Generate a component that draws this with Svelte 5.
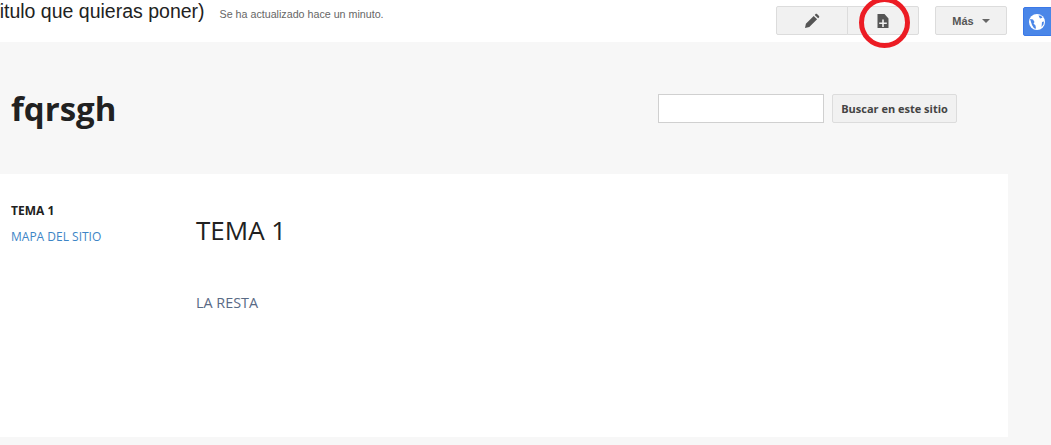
<script>
	let query = $state('');
</script>

<div class="page">
	<header class="topbar">
		<div class="title-wrap">
			<span class="page-title">(Titulo que quieras poner)</span>
			<span class="updated">Se ha actualizado hace un minuto.</span>
		</div>
		<div class="actions">
			<div class="btn-group">
				<button class="tool first" aria-label="Editar">
					<svg width="16" height="16" viewBox="0 0 16 16"><path d="M1 15l.9-4.300 7.800-7.800 3.400 3.400-7.800 7.800zM10.700 1.900l.9-.9c.4-.4 1-.4 1.400 0l2 2c.4.4.4 1 0 1.400l-.9.9z" fill="#555"/></svg>
				</button>
				<button class="tool last" aria-label="Nueva página">
					<svg width="12" height="14" viewBox="0 0 12 14"><path fill-rule="evenodd" d="M.5 0h7L11.500 4.500V14H.5zM5.200 5.500v3H2.200v1.600h3v3h1.600v-3h3V8.500h-3v-3z" fill="#555"/></svg>
				</button>
			</div>
			<button class="more">Más <span class="caret"></span></button>
			<button class="share" aria-label="Compartir">
				<svg width="16" height="16" viewBox="0 0 16 16"><circle cx="8" cy="8" r="8" fill="#fff"/><path d="M1 5l3 .5 1.500 2.500-1 1.500 2 2 .5 3.300-2-.5-2-3.300zM9.500 1.500l2.500.3 1.500 2-2.500.7zM13 8l2-.5-.5 3-2 2.500z" fill="#4a86e8"/></svg>
			</button>
		</div>
	</header>

	<section class="banner">
		<h1 class="site-name">fqrsgh</h1>
		<form class="search" onsubmit={(e) => e.preventDefault()}>
			<input type="text" bind:value={query} aria-label="Buscar" />
			<button type="submit">Buscar en este sitio</button>
		</form>
	</section>

	<main class="content">
		<nav class="sidebar">
			<a class="current" href="#tema">TEMA 1</a>
			<a href="#mapa">MAPA DEL SITIO</a>
		</nav>
		<article class="body">
			<h2>TEMA 1</h2>
			<p>LA RESTA</p>
		</article>
	</main>

	<!-- the red circle someone drew over the screenshot -->
	<div class="scribble"></div>
</div>

<style>
	:global(body) {
		margin: 0;
		background: #f7f7f7;
	}
	.page {
		position: relative;
		width: 1051px;
		height: 445px;
		overflow: hidden;
		background: #f7f7f7;
		font-family: "Open Sans", sans-serif;
	}
	.topbar {
		display: flex;
		justify-content: space-between;
		height: 42px;
		background: #fff;
	}
	.title-wrap {
		display: flex;
		align-items: baseline;
		gap: 15px;
		margin-left: -18px;
		font-family: "Liberation Sans", Arial, sans-serif;
		white-space: nowrap;
		height: 24px;
	}
	.page-title {
		font-size: 19.5px;
		line-height: 22px;
		color: #222;
	}
	.updated {
		font-size: 10.7px;
		color: #666;
	}
	.actions {
		display: flex;
		align-items: flex-start;
		padding-top: 6px;
		margin-right: -22px;
	}
	.btn-group {
		display: flex;
		margin-right: 16px;
	}
	button {
		font-family: "Liberation Sans", Arial, sans-serif;
		cursor: pointer;
	}
	.tool {
		display: flex;
		align-items: center;
		justify-content: center;
		width: 72px;
		height: 29px;
		padding: 0;
		background: #f1f1f1;
		border: 1px solid #dcdcdc;
	}
	.tool.first {
		border-radius: 2px 0 0 2px;
	}
	.tool.last {
		margin-left: -1px;
		border-radius: 0 2px 2px 0;
	}
	.more {
		display: flex;
		align-items: center;
		justify-content: center;
		gap: 8px;
		width: 72px;
		height: 29px;
		padding: 0;
		margin-right: 16px;
		background: #f1f1f1;
		border: 1px solid #dcdcdc;
		border-radius: 2px;
		font-size: 11px;
		font-weight: bold;
		color: #555;
	}
	.caret {
		width: 0;
		height: 0;
		border-left: 4px solid transparent;
		border-right: 4px solid transparent;
		border-top: 4px solid #666;
	}
	.share {
		display: flex;
		align-items: center;
		padding: 0 0 0 5px;
		width: 50px;
		height: 29px;
		margin-top: 1px;
		background: #4a86e8;
		border: 1px solid #3b78e7;
		border-radius: 2px;
	}
	.share svg {
		flex-shrink: 0;
	}
	.banner {
		display: flex;
		align-items: center;
		justify-content: space-between;
		height: 132px;
		padding: 0 94px 0 11px;
	}
	.site-name {
		margin: 0;
		font-size: 33px;
		font-weight: 700;
		color: #212121;
	}
	.search {
		display: flex;
		gap: 8px;
	}
	.search input {
		box-sizing: border-box;
		width: 166px;
		height: 29px;
		padding: 0 6px;
		background: #fff;
		border: 1px solid #d0d0d0;
		outline: none;
	}
	.search button {
		box-sizing: border-box;
		width: 125px;
		height: 29px;
		padding: 0;
		background: #f1f1f1;
		border: 1px solid #dcdcdc;
		border-radius: 2px;
		font-family: "Open Sans", sans-serif;
		font-size: 11px;
		font-weight: 700;
		color: #444;
	}
	.content {
		display: flex;
		width: 1008px;
		height: 263px;
		background: #fff;
	}
	.sidebar {
		display: flex;
		flex-direction: column;
		gap: 8px;
		width: 196px;
		padding: 28px 0 0 11px;
		box-sizing: border-box;
		font-size: 12px;
		line-height: 18px;
	}
	.sidebar a {
		color: #3d85c6;
		text-decoration: none;
	}
	.sidebar a.current {
		color: #212121;
		font-weight: 700;
	}
	.body h2 {
		margin: 38px 0 0;
		font-size: 26px;
		line-height: 36px;
		font-weight: 400;
		color: #212121;
	}
	.body p {
		margin: 45px 0 0;
		font-size: 14.4px;
		line-height: 20px;
		color: #596a85;
	}
	.scribble {
		position: absolute;
		left: 859px;
		top: -3px;
		box-sizing: border-box;
		width: 51px;
		height: 51px;
		border: 5px solid #ec1c24;
		border-radius: 50%;
	}
</style>
